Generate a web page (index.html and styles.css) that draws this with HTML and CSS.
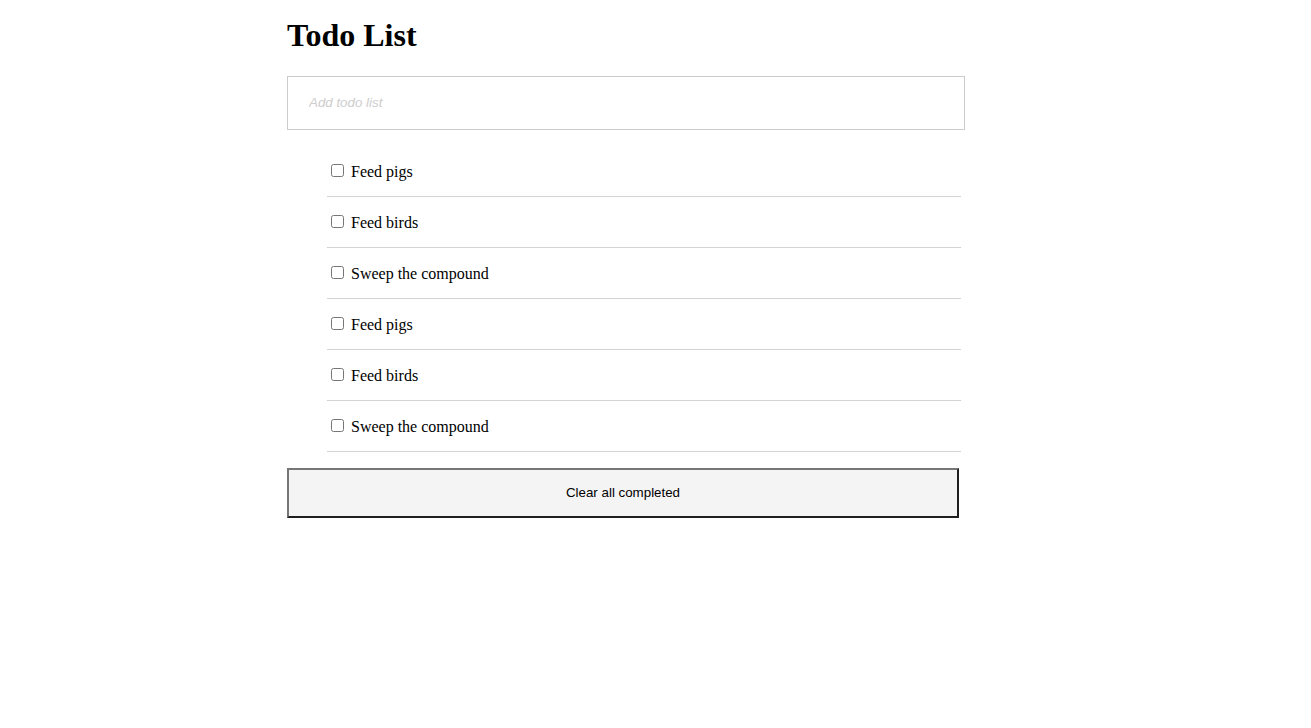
FILE: index.html
```html
<!DOCTYPE html>
<html lang="en">
<head>
<meta charset="utf-8">
<title>Todo List</title>
<link rel="stylesheet" href="styles.css">
</head>
<body>
<main class="app">
  <h1 class="title">Todo List</h1>
  <input class="new-todo" type="text" placeholder="Add todo list">
  <ul class="todos">
    <li class="todo"><label><input type="checkbox"> Feed pigs</label></li>
    <li class="todo"><label><input type="checkbox"> Feed birds</label></li>
    <li class="todo"><label><input type="checkbox"> Sweep the compound</label></li>
    <li class="todo"><label><input type="checkbox"> Feed pigs</label></li>
    <li class="todo"><label><input type="checkbox"> Feed birds</label></li>
    <li class="todo"><label><input type="checkbox"> Sweep the compound</label></li>
  </ul>
  <button class="clear" type="button">Clear all completed</button>
</main>
</body>
</html>
```

FILE: styles.css
```css
html, body {
  margin: 0;
  padding: 0;
  background: #fff;
}

body {
  font-family: "Liberation Serif", "Times New Roman", serif;
  font-size: 16px;
  color: #000;
}

.app {
  width: 678px;
  margin: 0 0 0 287px;
  padding-top: 17px;
}

.title {
  margin: 0 0 22px;
  font-size: 32px;
  line-height: 37px;
  font-weight: bold;
}

.new-todo {
  display: block;
  box-sizing: border-box;
  width: 678px;
  height: 54px;
  margin: 0;
  padding: 0 21px 2px;
  border: 1px solid #cccccc;
  outline: none;
  font-family: "Liberation Sans", Arial, sans-serif;
  font-size: 13.33px;
}

.new-todo::placeholder {
  color: #cdcdcd;
  font-style: italic;
}

.todos {
  list-style: none;
  margin: 16px 4px 16px 0;
  padding: 0 0 0 40px;
}

.todo {
  height: 50px;
  line-height: 52px;
  border-bottom: 1px solid #d3d3d3;
  overflow: hidden;
}

.todo label {
  display: block;
}

.todo input {
  margin: 3px 3px 3px 4px;
  vertical-align: 0;
}

.clear {
  display: block;
  box-sizing: border-box;
  width: 672px;
  height: 50px;
  margin: 0;
  padding: 0 0 2px;
  background: #f4f4f4;
  border: 2px solid;
  border-color: #767676 #1f1f1f #1f1f1f #767676;
  font-family: "Liberation Sans", Arial, sans-serif;
  font-size: 13.33px;
  color: #000;
}
```
